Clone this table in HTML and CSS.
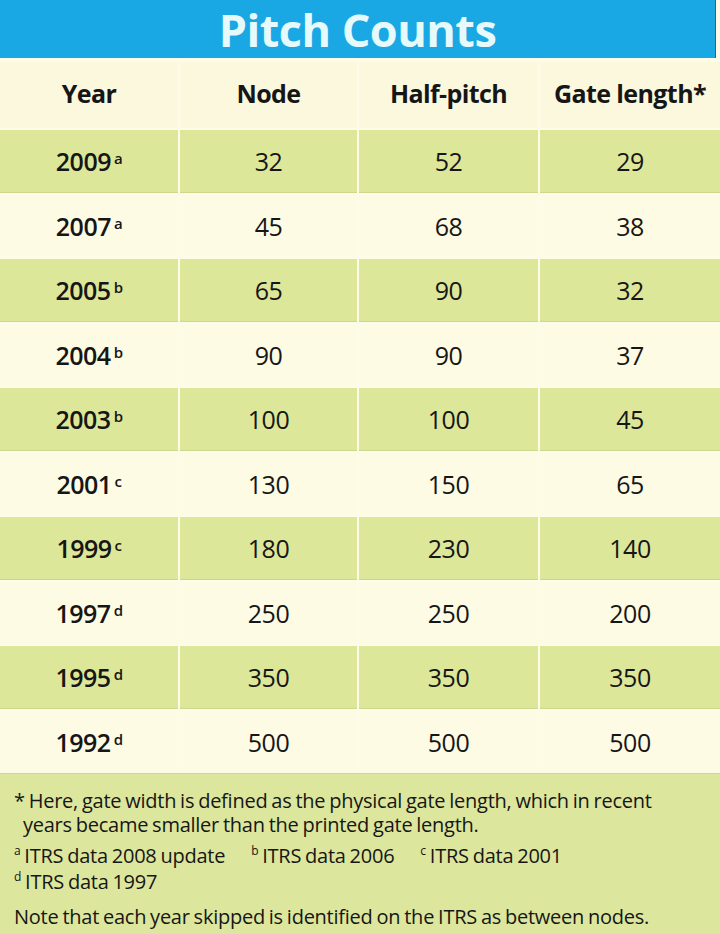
FILE: index.html
```html
<!DOCTYPE html>
<html>
<head>
<meta charset="utf-8">
<link rel="stylesheet" href="styles.css">
</head>
<body>
<div class="page">
  <div class="title">Pitch Counts</div>
  <div class="table">
    <div class="cell head">Year</div>
    <div class="cell head">Node</div>
    <div class="cell head">Half-pitch</div>
    <div class="cell head">Gate length*</div>

    <div class="cell g year">2009<sup>a</sup></div><div class="cell g">32</div><div class="cell g">52</div><div class="cell g">29</div>
    <div class="cell c year">2007<sup>a</sup></div><div class="cell c">45</div><div class="cell c">68</div><div class="cell c">38</div>
    <div class="cell g year">2005<sup>b</sup></div><div class="cell g">65</div><div class="cell g">90</div><div class="cell g">32</div>
    <div class="cell c year">2004<sup>b</sup></div><div class="cell c">90</div><div class="cell c">90</div><div class="cell c">37</div>
    <div class="cell g year">2003<sup>b</sup></div><div class="cell g">100</div><div class="cell g">100</div><div class="cell g">45</div>
    <div class="cell c year">2001<sup>c</sup></div><div class="cell c">130</div><div class="cell c">150</div><div class="cell c">65</div>
    <div class="cell g year">1999<sup>c</sup></div><div class="cell g">180</div><div class="cell g">230</div><div class="cell g">140</div>
    <div class="cell c year">1997<sup>d</sup></div><div class="cell c">250</div><div class="cell c">250</div><div class="cell c">200</div>
    <div class="cell g year">1995<sup>d</sup></div><div class="cell g">350</div><div class="cell g">350</div><div class="cell g">350</div>
    <div class="cell c year">1992<sup>d</sup></div><div class="cell c">500</div><div class="cell c">500</div><div class="cell c">500</div>
  </div>
  <div class="notes">
    <p class="star">* Here, gate width is defined as the physical gate length, which in recent</p>
    <p class="star2">years became smaller than the printed gate length.</p>
    <p class="refs"><span class="ref"><sup>a</sup> ITRS data 2008 update</span><span class="ref"><sup>b</sup> ITRS data 2006</span><span class="ref"><sup>c</sup> ITRS data 2001</span></p>
    <p class="refs2"><span class="ref"><sup>d</sup> ITRS data 1997</span></p>
    <p class="note">Note that each year skipped is identified on the ITRS as between nodes.</p>
  </div>
</div>
</body>
</html>
```

FILE: styles.css
```css
html, body {
  margin: 0;
  padding: 0;
  background: #fdfbe6;
}
.page {
  width: 720px;
  height: 934px;
  overflow: hidden;
  font-family: "Open Sans", "Liberation Sans", sans-serif;
  color: #161616;
}
.title {
  height: 58px;
  margin-right: 4px;
  background: #1aa8e4;
  border-right: 1px solid #0c6e9a;
  color: #e6f9fb;
  font-weight: 700;
  font-size: 45px;
  line-height: 60px;
  text-align: center;
  letter-spacing: -0.5px;
}
.table {
  display: grid;
  grid-template-columns: 178px 177px 179px 180px;
  grid-template-rows: 66px;
  grid-auto-rows: 62.5px;
  column-gap: 2px;
  row-gap: 2px;
  padding-top: 4px;
  background: #fdfce8;
}
.cell {
  display: flex;
  align-items: center;
  justify-content: center;
  font-size: 25px;
  letter-spacing: -0.5px;
}
.head {
  font-weight: 700;
  font-size: 25px;
  background: #fbf8de;
  padding-bottom: 4px;
  letter-spacing: -0.6px;
}
.g {
  background: #dde799;
  box-shadow: inset 0 -1px 0 #cdd68a;
}
.c {
  background: #fdfbe4;
}
.year {
  font-weight: 600;
}
.year sup {
  font-size: 15px;
  margin-left: 3px;
  position: relative;
  top: -3px;
}
.notes {
  background: #dce69c;
  padding: 15px 0 8px 14px;
  font-size: 20px;
  line-height: 24px;
  height: 138px;
  border-top: 1px solid #cfd98c;
  letter-spacing: -0.25px;
  word-spacing: -1px;
}
.notes p {
  margin: 0;
}
.star2 {
  padding-left: 9px;
}
.refs {
  margin-top: 3px !important;
  line-height: 22px;
}
.refs2 {
  line-height: 22px;
}
.notes sup {
  font-size: 12px;
}
.ref {
  margin-right: 26px;
}
.note {
  margin-top: 12px !important;
}
```
